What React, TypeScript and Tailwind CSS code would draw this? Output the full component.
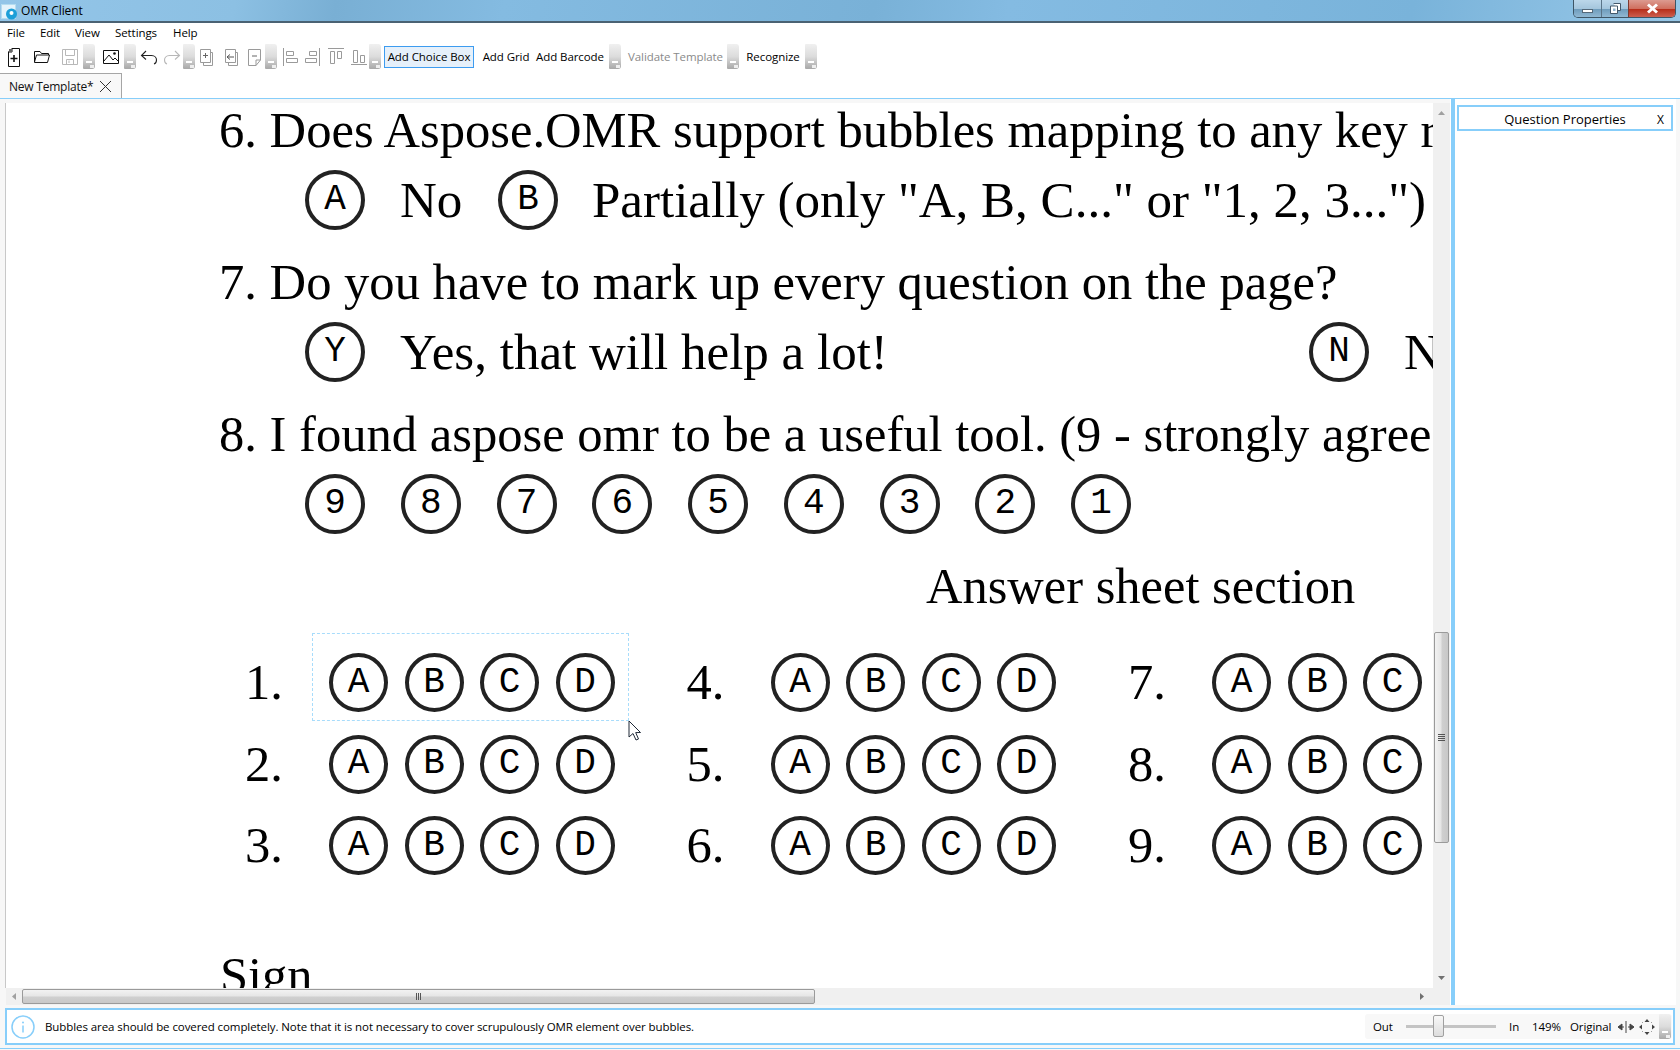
import React from "react";

const ui = "font-['Open_Sans','Noto_Sans',sans-serif]";

function Grip({ className = "" }: { className?: string }) {
  return (
    <div className={`relative w-[12px] h-[25px] rounded-r-[3px] rounded-l-[1px] bg-[linear-gradient(180deg,#f0f0f0_0%,#dcdcdc_50%,#a8a8a8_100%)] shrink-0 ${className}`}>
      <div className="absolute left-[3px] top-[17px] w-[6px] h-[2px] bg-white" />
      <div className="absolute right-[1px] bottom-[1px] w-[4px] h-[3px] bg-[#eeeeee]" />
    </div>
  );
}

function Ico({ className = "", children, w = 20 }: { className?: string; children: React.ReactNode; w?: number }) {
  return (
    <svg width={w} height="24" viewBox={`0 0 ${w} 24`} fill="none" strokeWidth="1" className={`shrink-0 ${className}`}>
      {children}
    </svg>
  );
}

function Bubble({ t, size = "big" }: { t: string; size?: "big" | "small" }) {
  return (
    <div className={`shrink-0 flex items-center justify-center rounded-full border-[4px] border-[#222222] font-['Liberation_Mono',monospace] text-[36px] leading-none text-black ${size === "big" ? "w-[60px] h-[60px]" : "w-[59px] h-[59px]"}`}>
      {t}
    </div>
  );
}

function AnswerGroup({ n }: { n: number }) {
  return (
    <div className="flex items-center w-[441.5px] shrink-0">
      <div className="w-[84px] text-[50.6px] leading-none">{n}.</div>
      <div className="flex gap-[16.5px]">
        {["A", "B", "C", "D"].map((l) => (
          <Bubble key={l} t={l} size="small" />
        ))}
      </div>
    </div>
  );
}

function Page() {
  return (
    <div className="relative w-[1427px] h-[885px] overflow-hidden bg-white text-black font-['Liberation_Serif',serif] whitespace-nowrap">
      <div className="h-[56px] pl-[213px] text-[50.6px] leading-[54px]">6. Does Aspose.OMR support bubbles mapping to any key required?</div>
      <div className="mt-[11px] h-[60px] pl-[299px] flex items-center text-[51px]">
        <Bubble t="A" />
        <span className="ml-[35px] w-[98px] shrink-0">No</span>
        <Bubble t="B" />
        <span className="ml-[34px] shrink-0">Partially (only "A, B, C..." or "1, 2, 3...")</span>
      </div>
      <div className="mt-[25px] h-[56px] pl-[213px] text-[50.6px] leading-[54px]">7. Do you have to mark up every question on the page?</div>
      <div className="mt-[11px] h-[60px] pl-[299px] flex items-center text-[51px]">
        <Bubble t="Y" />
        <span className="ml-[35px] w-[909px] shrink-0">Yes, that will help a lot!</span>
        <Bubble t="N" />
        <span className="ml-[35px] shrink-0">No</span>
      </div>
      <div className="mt-[25px] h-[56px] pl-[213px] text-[50.6px] leading-[54px]">8. I found aspose omr to be a useful tool. (9 - strongly agree, 1 - disagree)</div>
      <div className="mt-[11px] h-[60px] pl-[299px] flex items-center gap-[35.75px]">
        {["9", "8", "7", "6", "5", "4", "3", "2", "1"].map((d) => (
          <Bubble key={d} t={d} />
        ))}
      </div>
      <div className="mt-[24px] h-[56px] pl-[920px] text-[50.5px] leading-[56px]">Answer sheet section</div>
      <div className="mt-[39px] flex flex-col gap-[22.5px] pl-[239px]">
        {[0, 1, 2].map((r) => (
          <div key={r} className="flex h-[59px]">
            <AnswerGroup n={r + 1} />
            <AnswerGroup n={r + 4} />
            <AnswerGroup n={r + 7} />
          </div>
        ))}
      </div>
      <div className="mt-[72px] h-[56px] pl-[214px] text-[50.5px] leading-[56px]">Sign</div>

      <div className="absolute left-[306px] top-[530px] w-[317px] h-[88px] border border-dashed border-[#a8dcfb]" />
      <svg width="14" height="22" viewBox="0 0 14 22" className="absolute left-[622px] top-[617px]">
        <path d="M1 1 V17 L5 13.5 L8 20 L10.5 19 L7.7 12.6 L12.5 12.5 Z" fill="#ffffff" stroke="#1f2937" strokeWidth="1" />
      </svg>
    </div>
  );
}

function VScroll() {
  return (
    <div className="relative w-[17px] h-[885px] bg-[#f0f0f0] shrink-0 flex flex-col items-center">
      <svg width="9" height="6" viewBox="0 0 9 6" className="mt-[7px] shrink-0"><path d="M4.5 1 L8 5 H1 Z" fill="#a0a0a0" /></svg>
      <div className="mt-[516px] w-[15px] h-[211px] rounded-[2px] border border-[#9a9a9a] bg-[linear-gradient(90deg,#f2f2f2_0%,#e6e6e6_45%,#cfcfcf_55%,#c8c8c8_100%)] flex flex-col items-center justify-center gap-[1px] shrink-0">
        <div className="w-[7px] h-px bg-[#555555]" />
        <div className="w-[7px] h-px bg-[#555555]" />
        <div className="w-[7px] h-px bg-[#555555]" />
        <div className="w-[7px] h-px bg-[#555555]" />
      </div>
      <svg width="9" height="6" viewBox="0 0 9 6" className="mt-[132px] shrink-0"><path d="M1 1 H8 L4.5 5 Z" fill="#707070" /></svg>
    </div>
  );
}

function HScroll() {
  return (
    <div className="h-[17px] w-[1444px] bg-[#f0f0f0] flex items-center">
      <svg width="6" height="9" viewBox="0 0 6 9" className="ml-[5px] shrink-0"><path d="M5 1 V8 L1 4.5 Z" fill="#a0a0a0" /></svg>
      <div className="ml-[5px] w-[793px] h-[15px] rounded-[2px] border border-[#9a9a9a] bg-[linear-gradient(180deg,#f2f2f2_0%,#e6e6e6_45%,#cfcfcf_55%,#c8c8c8_100%)] flex items-center justify-center gap-[1px] shrink-0">
        <div className="w-px h-[7px] bg-[#555555]" />
        <div className="w-px h-[7px] bg-[#555555]" />
        <div className="w-px h-[7px] bg-[#555555]" />
      </div>
      <svg width="6" height="9" viewBox="0 0 6 9" className="ml-[604px] shrink-0"><path d="M1 1 L5 4.5 L1 8 Z" fill="#707070" /></svg>
    </div>
  );
}

function Toolbar() {
  const gray = "#9a9a9a";
  return (
    <div className="h-[27px] flex items-center pl-[4px] text-[11.5px] tracking-[-0.08px] whitespace-nowrap text-black">
      <Ico>
        <path d="M8 3.5 H15.5 V21.5 H4.5 V7 Z M8 3.5 V7 H4.5" stroke="#111" fill="#fff" />
        <path d="M5 4 L8 4 L8 7 L5 7 Z" fill="#666" />
        <path d="M10 10 V17 M6.5 13.5 H13.5" stroke="#111" strokeWidth="1.6" />
      </Ico>
      <Ico className="ml-[8px]">
        <path d="M2.5 6.5 H8 L9.5 8.5 H16.5 V10 M2.5 6.5 V17.5 H15.5 L17.5 10 H4.5 L2.5 17" stroke="#111" />
      </Ico>
      <Ico className="ml-[8px]">
        <path d="M2.5 4.5 H17.5 V19.5 H2.5 Z M5.5 4.5 V10.5 H14.5 V4.5 M6.5 19.5 V14.5 H13.5 V19.5 M9 15.5 V18" stroke="#b8b8b8" />
      </Ico>
      <Grip className="ml-[3px]" />
      <Ico className="ml-[6px]">
        <path d="M2.5 5.5 H17.5 V18.5 H2.5 Z" stroke="#111" />
        <path d="M3 16 L8 10 L12 15 L14 13 L17 16" stroke="#111" />
        <circle cx="13.5" cy="8.5" r="1.3" fill="#111" />
      </Ico>
      <Grip className="ml-[3px]" />
      <Ico className="ml-[3px]">
        <path d="M7 6 L2.5 10.5 L7 14.5 M2.5 10.5 H12.5 C16 10.5 17.5 13 17.5 15 C17.5 17 16.5 18.5 15 19" stroke="#222" strokeWidth="1.1" />
      </Ico>
      <Ico className="ml-[3px]">
        <path d="M13 6 L17.5 10.5 L13 14.5 M17.5 10.5 H7.5 C4 10.5 2.5 13 2.5 15 C2.5 17 3.5 18.5 5 19" stroke="#b8b8b8" strokeWidth="1.1" />
      </Ico>
      <Grip className="ml-[1px]" />
      <Ico className="ml-[1px]">
        <path d="M4.5 4.5 H14.5 V17.5 H4.5 Z M14.5 7.5 H16.5 V20.5 H7.5 V17.5" stroke={gray} />
        <path d="M9.5 8 V13 M7 10.5 H12" stroke="#666" />
      </Ico>
      <Ico className="ml-[5px]">
        <path d="M4.5 4.5 H14.5 V17.5 H4.5 Z M14.5 7.5 H16.5 V20.5 H7.5 V17.5" stroke={gray} />
        <path d="M6 12 H13 M6 12 L9 9.5 M6 12 L9 14.5" stroke="#555" />
      </Ico>
      <Ico className="ml-[4px]" w={18}>
        <path d="M3.5 4.5 H15.5 V15 L11 20.5 H3.5 Z M11 20.5 V15 H15.5" stroke={gray} />
        <path d="M7 11 H12" stroke="#666" />
      </Ico>
      <Grip className="ml-[2px]" />
      <Ico className="ml-[3px]">
        <path d="M3.5 3 V21" stroke={gray} />
        <path d="M6.5 6.5 H13.5 V10.5 H6.5 Z M6.5 13.5 H17.5 V17.5 H6.5 Z" stroke={gray} />
      </Ico>
      <Ico className="ml-[3px]">
        <path d="M16.5 3 V21" stroke={gray} />
        <path d="M6.5 6.5 H13.5 V10.5 H6.5 Z M2.5 13.5 H13.5 V17.5 H2.5 Z" stroke={gray} />
      </Ico>
      <Ico className="ml-[3px]">
        <path d="M2 3.5 H18" stroke={gray} />
        <path d="M4.5 6.5 H8.5 V18.5 H4.5 Z M11.5 6.5 H15.5 V13.5 H11.5 Z" stroke={gray} />
      </Ico>
      <Ico className="ml-[3px]">
        <path d="M2 19.5 H18" stroke={gray} />
        <path d="M4.5 5.5 H8.5 V17.5 H4.5 Z M11.5 10.5 H15.5 V17.5 H11.5 Z" stroke={gray} />
      </Ico>
      <Grip />
      <div className="ml-[3px] w-[90px] h-[22px] border border-[#3d9cf0] bg-[#e6f0fa] flex items-center justify-center">Add Choice Box</div>
      <div className="ml-[8px] w-[48px] text-center">Add Grid</div>
      <div className="ml-[5px] w-[70px] text-center">Add Barcode</div>
      <Grip className="ml-[4px]" />
      <div className="ml-[7px] w-[95px] text-center text-[#8a8a8a]">Validate Template</div>
      <Grip className="ml-[4px]" />
      <div className="ml-[7px] w-[54px] text-center">Recognize</div>
      <Grip className="ml-[5px]" />
    </div>
  );
}

function ZoomBar() {
  return (
    <div className="ml-auto mr-px w-[307px] h-[25px] flex items-center rounded-[3px] bg-[#f8f8f8] text-[11.5px] tracking-[-0.08px] text-black">
      <span className="ml-[8px] w-[33px]">Out</span>
      <div className="relative w-[90px] h-[3px] bg-[#c4c4c4]">
        <div className="absolute left-[27px] -top-[10px] w-[11px] h-[22px] rounded-[2px] border border-[#a0a0a0] bg-[linear-gradient(180deg,#f8f8f8_0%,#dddddd_100%)]" />
      </div>
      <span className="ml-[13px] w-[23px]">In</span>
      <span className="w-[38px]">149%</span>
      <span className="w-[47px]">Original</span>
      <svg width="18" height="14" viewBox="0 0 18 14" className="shrink-0">
        <path d="M9 1 V13 M1 7 L5 4 V10 Z M17 7 L13 4 V10 Z M5 7 H7 M11 7 H13" stroke="#444" fill="#444" />
      </svg>
      <svg width="18" height="18" viewBox="0 0 18 18" className="ml-[3px] shrink-0">
        <path d="M9 1 L6.5 4 H11.5 Z M9 17 L6.5 14 H11.5 Z M1 9 L4 6.5 V11.5 Z M17 9 L14 6.5 V11.5 Z" fill="#444" />
        <path d="M5 5 L4.5 4.5 M13 5 L13.5 4.5 M5 13 L4.5 13.5 M13 13 L13.5 13.5" stroke="#444" />
      </svg>
      <Grip className="ml-[3px]" />
    </div>
  );
}

export default function App() {
  return (
    <div className={`relative w-[1680px] h-[1050px] overflow-hidden bg-[#f7f7f7] flex flex-col ${ui}`}>
      <div className="h-[23px] shrink-0 border-b-2 border-[#4a6273] bg-[linear-gradient(100deg,#93c5e8_0%,#8cc0e3_14%,#79afd4_20%,#84bbe1_30%,#79b1d7_52%,#84bbe2_60%,#79b3da_84%,#98c8e8_100%)] flex items-start">
        <svg width="16" height="16" viewBox="0 0 16 16" className="ml-px mt-[4px] shrink-0">
          <rect x="0.5" y="0.5" width="14" height="14" fill="#e4f3fb" stroke="#b4dcf0" />
          <circle cx="10.5" cy="10" r="5.5" fill="#1d9fd8" />
          <circle cx="10.5" cy="9" r="2" fill="#ffffff" />
        </svg>
        <span className="ml-[4px] text-[12px] tracking-[-0.1px] leading-[21px] text-black">OMR Client</span>
        <div className="ml-auto mr-[4px] flex h-[18px] rounded-b-[5px] border border-t-0 border-[#3e5566] overflow-hidden shrink-0">
          <div className="w-[28px] bg-[linear-gradient(180deg,#bcd7ea_0%,#a5c6dd_50%,#6f9cbc_55%,#90b8d3_100%)] border-r border-[#5a7488] flex items-center justify-center">
            <div className="w-[11px] h-[4px] bg-white border border-[#55697a] mt-[4px]" />
          </div>
          <div className="w-[26px] bg-[linear-gradient(180deg,#bcd7ea_0%,#a5c6dd_50%,#6f9cbc_55%,#90b8d3_100%)] flex items-center justify-center">
            <svg width="11" height="11" viewBox="0 0 11 11"><path d="M3.5 0.5 H10.5 V7.5 H8 M0.5 3 H7.5 V10.5 H0.5 Z" fill="#ffffff" stroke="#44586a" /><path d="M3 5.5 H5.5 V8 H3 Z" fill="#8fb4cf" /></svg>
          </div>
          <div className="w-[47px] bg-[linear-gradient(180deg,#dc9b90_0%,#d0705f_50%,#b72e1a_55%,#cc5f4f_100%)] border-l border-[#7d3a30] flex items-center justify-center">
            <svg width="13" height="11" viewBox="0 0 13 11"><path d="M2 1.5 L11 9.5 M11 1.5 L2 9.5" stroke="#ffffff" strokeWidth="3" /></svg>
          </div>
        </div>
      </div>

      <div className="h-[20px] pb-px shrink-0 bg-white flex items-center text-[11.5px] tracking-[-0.08px] text-black pl-[7px]">
        <span className="w-[33px]">File</span>
        <span className="w-[35px]">Edit</span>
        <span className="w-[40px]">View</span>
        <span className="w-[58px]">Settings</span>
        <span>Help</span>
      </div>

      <div className="bg-white shrink-0 h-[30px]">
        <Toolbar />
      </div>

      <div className="h-[25px] shrink-0 bg-white flex items-end">
        <div className="w-[122px] h-[25px] pt-px bg-[#f8f8f8] border border-b-0 border-l-0 border-[#a6a6a6] flex items-center text-[12px] tracking-[-0.22px] whitespace-nowrap text-[#111111] pl-[9px]">
          <span>New Template*</span>
          <svg width="13" height="13" viewBox="0 0 13 13" className="ml-auto mr-[9px] shrink-0"><path d="M1 1 L12 12 M12 1 L1 12" stroke="#333333" /></svg>
        </div>
      </div>

      <div className="h-[908px] shrink-0 border-t border-[#87cefa] flex">
        <div className="w-[1450px] shrink-0 pt-[4px] pl-[5px] flex flex-col">
          <div className="flex border-l border-[#c8c8c8]">
            <Page />
            <VScroll />
          </div>
          <div className="pl-px"><HScroll /></div>
        </div>
        <div className="w-[5px] h-[906px] shrink-0 bg-white flex">
          <div className="w-[3px] ml-px bg-[#87cefa]" />
          <div className="w-px bg-[#87cefa]" />
        </div>
        <div className="w-[221px] h-[906px] shrink-0 bg-white pl-[2px] pr-[3px] pt-[6px]">
          <div className="h-[26px] pt-[3px] border-2 border-[#87cefa] flex items-center text-[13px] text-black relative">
            <span className="w-full text-center">Question Properties</span>
            <span className="absolute right-[7px] text-[12px]">X</span>
          </div>
        </div>
      </div>

      <div className="ml-[5px] w-[1670px] h-[37px] mt-[2px] shrink-0 border-2 border-[#87cefa] bg-white flex items-center text-[11.5px] tracking-[-0.08px] text-black">
        <svg width="24" height="24" viewBox="0 0 24 24" className="ml-[4px] shrink-0">
          <circle cx="12" cy="12" r="11" fill="none" stroke="#87cefa" strokeWidth="1.5" />
          <circle cx="12" cy="7.5" r="1" fill="#87cefa" />
          <path d="M12 10.5 V17.5" stroke="#87cefa" strokeWidth="1.5" />
        </svg>
        <span className="ml-[10px] whitespace-nowrap">Bubbles area should be covered completely. Note that it is not necessary to cover scrupulously OMR element over bubbles.</span>
        <ZoomBar />
      </div>
      <div className="mt-[3px] h-px bg-[#87cefa]" />
    </div>
  );
}
